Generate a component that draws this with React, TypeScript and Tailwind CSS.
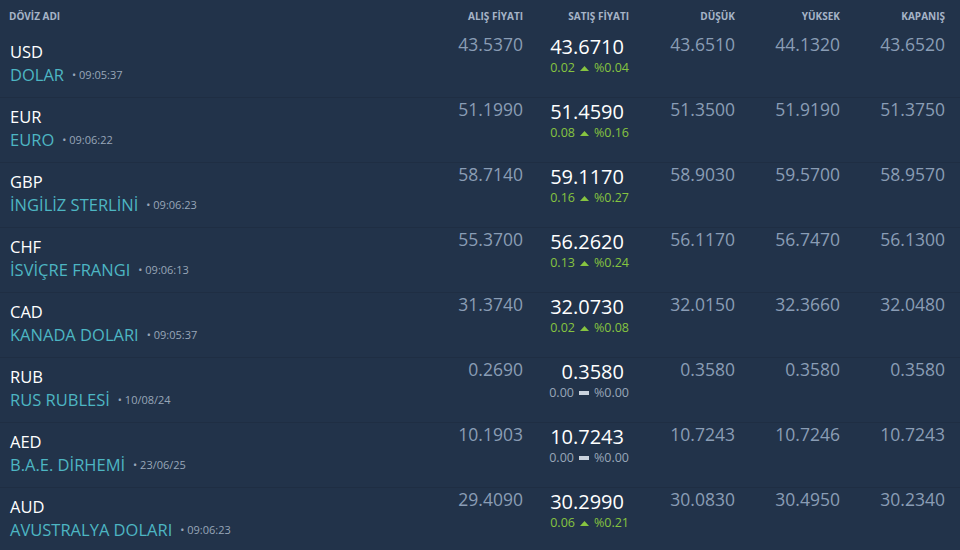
import React from 'react';

type Row = {
  code: string;
  name: string;
  time: string;
  buy: string;
  sell: string;
  diff: string;
  pct: string;
  low: string;
  high: string;
  close: string;
};

const rows: Row[] = [
  { code: 'USD', name: 'DOLAR', time: '09:05:37', buy: '43.5370', sell: '43.6710', diff: '0.02', pct: '%0.04', low: '43.6510', high: '44.1320', close: '43.6520' },
  { code: 'EUR', name: 'EURO', time: '09:06:22', buy: '51.1990', sell: '51.4590', diff: '0.08', pct: '%0.16', low: '51.3500', high: '51.9190', close: '51.3750' },
  { code: 'GBP', name: 'İNGİLİZ STERLİNİ', time: '09:06:23', buy: '58.7140', sell: '59.1170', diff: '0.16', pct: '%0.27', low: '58.9030', high: '59.5700', close: '58.9570' },
  { code: 'CHF', name: 'İSVİÇRE FRANGI', time: '09:06:13', buy: '55.3700', sell: '56.2620', diff: '0.13', pct: '%0.24', low: '56.1170', high: '56.7470', close: '56.1300' },
  { code: 'CAD', name: 'KANADA DOLARI', time: '09:05:37', buy: '31.3740', sell: '32.0730', diff: '0.02', pct: '%0.08', low: '32.0150', high: '32.3660', close: '32.0480' },
  { code: 'RUB', name: 'RUS RUBLESİ', time: '10/08/24', buy: '0.2690', sell: '0.3580', diff: '0.00', pct: '%0.00', low: '0.3580', high: '0.3580', close: '0.3580' },
  { code: 'AED', name: 'B.A.E. DİRHEMİ', time: '23/06/25', buy: '10.1903', sell: '10.7243', diff: '0.00', pct: '%0.00', low: '10.7243', high: '10.7246', close: '10.7243' },
  { code: 'AUD', name: 'AVUSTRALYA DOLARI', time: '09:06:23', buy: '29.4090', sell: '30.2990', diff: '0.06', pct: '%0.21', low: '30.0830', high: '30.4950', close: '30.2340' },
];

function Change({ diff, pct }: { diff: string; pct: string }) {
  const flat = diff === '0.00';
  return (
    <div className={`flex items-center justify-end gap-[5px] text-[12.5px] leading-[16px] ${flat ? 'text-[#98a6b8]' : 'text-[#86c440]'}`}>
      <span>{diff}</span>
      {flat ? (
        <span className="inline-block h-[4px] w-[10px] bg-[#c9d2dd]" />
      ) : (
        <svg width="9" height="5" viewBox="0 0 9 5" className="fill-[#86c440]">
          <path d="M0 5 L4.5 0 L9 5 Z" />
        </svg>
      )}
      <span>{pct}</span>
    </div>
  );
}

export default function App() {
  return (
    <div className="h-[550px] w-[960px] overflow-hidden bg-[#22334a] font-['Open_Sans','Noto_Sans',sans-serif]">
      <div className="flex h-[33px] items-center pr-[15px] text-[10px] font-bold uppercase text-[#a6b4c7]">
        <div className="flex-1 pl-[9px]">DÖVİZ ADI</div>
        <div className="w-[107px] text-right">ALIŞ FİYATI</div>
        <div className="w-[106px] text-right">SATIŞ FİYATI</div>
        <div className="w-[106px] text-right">DÜŞÜK</div>
        <div className="w-[105px] text-right">YÜKSEK</div>
        <div className="w-[105px] text-right">KAPANIŞ</div>
      </div>
      {rows.map((r) => (
        <div key={r.code} className="flex h-[65px] border-b border-[#1f2e43] pr-[15px]">
          <div className="flex-1 pl-[10px] pt-[8px]">
            <div className="text-[16.5px] leading-[22px] text-white">{r.code}</div>
            <div className="mt-[1px] flex items-center">
              <span className="text-[16.5px] leading-[22px] text-[#4db6c3]">{r.name}</span>
              <span className="ml-[8px] text-[11px] text-[#98a6b8]">• {r.time}</span>
            </div>
          </div>
          <div className="w-[107px] text-right text-[17.5px] leading-[22px] text-[#8a9db5]">{r.buy}</div>
          <div className="w-[106px] pt-[1px]">
            <div className="pr-[5px] text-right text-[20px] leading-[26px] text-white">{r.sell}</div>
            <Change diff={r.diff} pct={r.pct} />
          </div>
          <div className="w-[106px] text-right text-[17.5px] leading-[22px] text-[#8a9db5]">{r.low}</div>
          <div className="w-[105px] text-right text-[17.5px] leading-[22px] text-[#8a9db5]">{r.high}</div>
          <div className="w-[105px] text-right text-[17.5px] leading-[22px] text-[#8a9db5]">{r.close}</div>
        </div>
      ))}
    </div>
  );
}
